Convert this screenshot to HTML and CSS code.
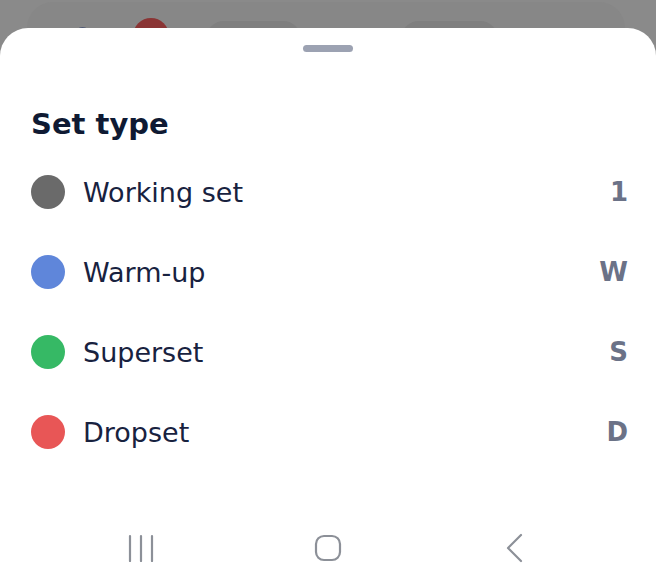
FILE: index.html
```html
<!DOCTYPE html>
<html lang="en">
<head>
<meta charset="utf-8">
<title>Set type</title>
<link rel="stylesheet" href="styles.css">
</head>
<body>
<div class="screen">
  <div class="under">
    <div class="ucard">
      <span class="u-dot"></span>
      <span class="u-red"></span>
      <span class="u-pill"></span>
      <span class="u-pill u-pill2"></span>
    </div>
  </div>
  <div class="sheet">
    <div class="handle"></div>
    <h1 class="title">Set type</h1>
    <ul class="list">
      <li class="row"><span class="dot dot-work"></span><span class="label">Working set</span><span class="code">1</span></li>
      <li class="row"><span class="dot dot-warm"></span><span class="label">Warm-up</span><span class="code">W</span></li>
      <li class="row"><span class="dot dot-super"></span><span class="label">Superset</span><span class="code">S</span></li>
      <li class="row"><span class="dot dot-drop"></span><span class="label">Dropset</span><span class="code">D</span></li>
    </ul>
    <nav class="navbar">
      <span class="nav-item">
        <svg width="26" height="28" viewBox="0 0 26 28"><path d="M2 2v25M13 2v25M24 2v25" stroke="#8c9098" stroke-width="2.2" fill="none" stroke-linecap="round"/></svg>
      </span>
      <span class="nav-item">
        <svg width="28" height="28" viewBox="0 0 28 28"><rect x="2" y="2" width="24" height="24" rx="8" stroke="#8c9098" stroke-width="2.2" fill="none"/></svg>
      </span>
      <span class="nav-item">
        <svg width="20" height="30" viewBox="0 0 20 30"><path d="M16 2L3 15l13 13" stroke="#8c9098" stroke-width="2.2" fill="none" stroke-linecap="round" stroke-linejoin="round"/></svg>
      </span>
    </nav>
  </div>
</div>
</body>
</html>
```

FILE: styles.css
```css
* { box-sizing: border-box; }
html, body { margin: 0; padding: 0; }
body {
  width: 656px;
  height: 586px;
  overflow: hidden;
  font-family: "DejaVu Sans", Inter, sans-serif;
}
.screen {
  position: relative;
  width: 656px;
  height: 586px;
  overflow: hidden;
  background: #8a8a8a;
}
.under {
  height: 586px;
}
.ucard {
  margin: 2px 31px 0 27px;
  height: 80px;
  border-radius: 26px 26px 0 0;
  background: #878787;
  display: flex;
  align-items: flex-start;
  padding: 16px 0 0 48px;
}
.u-dot {
  width: 15px;
  height: 15px;
  margin-top: 9px;
  border-radius: 50%;
  background: #4e5874;
}
.u-red {
  width: 36px;
  height: 36px;
  margin-left: 43px;
  border-radius: 50%;
  background: #8a3434;
}
.u-pill {
  width: 95px;
  height: 44px;
  margin-top: 3px;
  margin-left: 37px;
  border-radius: 18px;
  background: #7f7f7f;
}
.u-pill2 {
  width: 97px;
  margin-left: 100px;
}
.sheet {
  position: absolute;
  top: 28px;
  left: 0;
  right: 0;
  bottom: 0;
  background: #ffffff;
  border-radius: 28px 28px 0 0;
  display: flex;
  flex-direction: column;
}
.handle {
  width: 50px;
  height: 7px;
  margin: 17px auto 0;
  border-radius: 4px;
  background: #9ca2b2;
}
.title {
  margin: 52px 0 8px 31px;
  font-size: 29px;
  line-height: 40px;
  font-weight: 700;
  color: #0f1a33;
  letter-spacing: 0;
}
.list {
  list-style: none;
  margin: 0;
  padding: 0;
}
.row {
  height: 80px;
  display: flex;
  align-items: center;
  padding: 0 28px 0 31px;
}
.dot {
  width: 34px;
  height: 34px;
  border-radius: 50%;
  flex: none;
}
.dot-work { background: #6a6a6a; }
.dot-warm { background: #5f86da; }
.dot-super { background: #36b965; }
.dot-drop { background: #e85656; }
.label {
  margin-left: 18px;
  font-size: 27px;
  color: #18223f;
}
.code {
  margin-left: auto;
  font-size: 26px;
  font-weight: 700;
  color: #6b7287;
}
.navbar {
  margin-top: auto;
  height: 76px;
  display: grid;
  grid-template-columns: repeat(3, 187px);
  justify-content: center;
  align-items: center;
  justify-items: center;
}
.nav-item {
  display: flex;
  align-items: center;
  justify-content: center;
}
.nav-item svg { display: block; }
```
